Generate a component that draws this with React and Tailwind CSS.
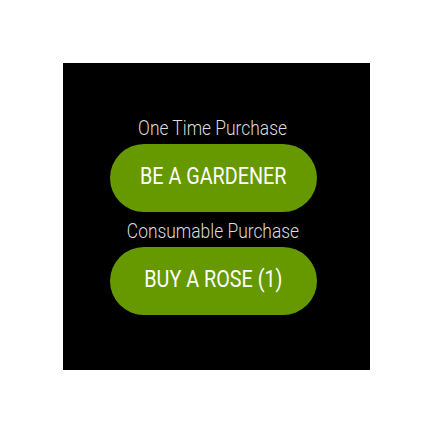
export default function App() {
  return (
    <div className="w-[432px] h-[432px] bg-white flex items-center justify-center">
      <div className="w-[307px] h-[307px] bg-black flex flex-col items-center justify-center pr-[6px] pb-[2px] font-['Roboto',sans-serif]">
        <span className="text-[20px] leading-[24px] font-light text-[#dcdcdc] inline-block scale-x-[0.87]">
          One Time Purchase
        </span>
        <button className="mt-[4px] w-[207px] h-[68px] rounded-full bg-[#669900] text-white text-[23px]">
          <span className="inline-block scale-x-[0.86]">BE A GARDENER</span>
        </button>
        <span className="mt-[7px] text-[20px] leading-[24px] font-light text-[#dcdcdc] inline-block scale-x-[0.87]">
          Consumable Purchase
        </span>
        <button className="mt-[4px] w-[207px] h-[68px] rounded-full bg-[#669900] text-white text-[23px]">
          <span className="inline-block scale-x-[0.86]">BUY A ROSE (1)</span>
        </button>
      </div>
    </div>
  );
}
